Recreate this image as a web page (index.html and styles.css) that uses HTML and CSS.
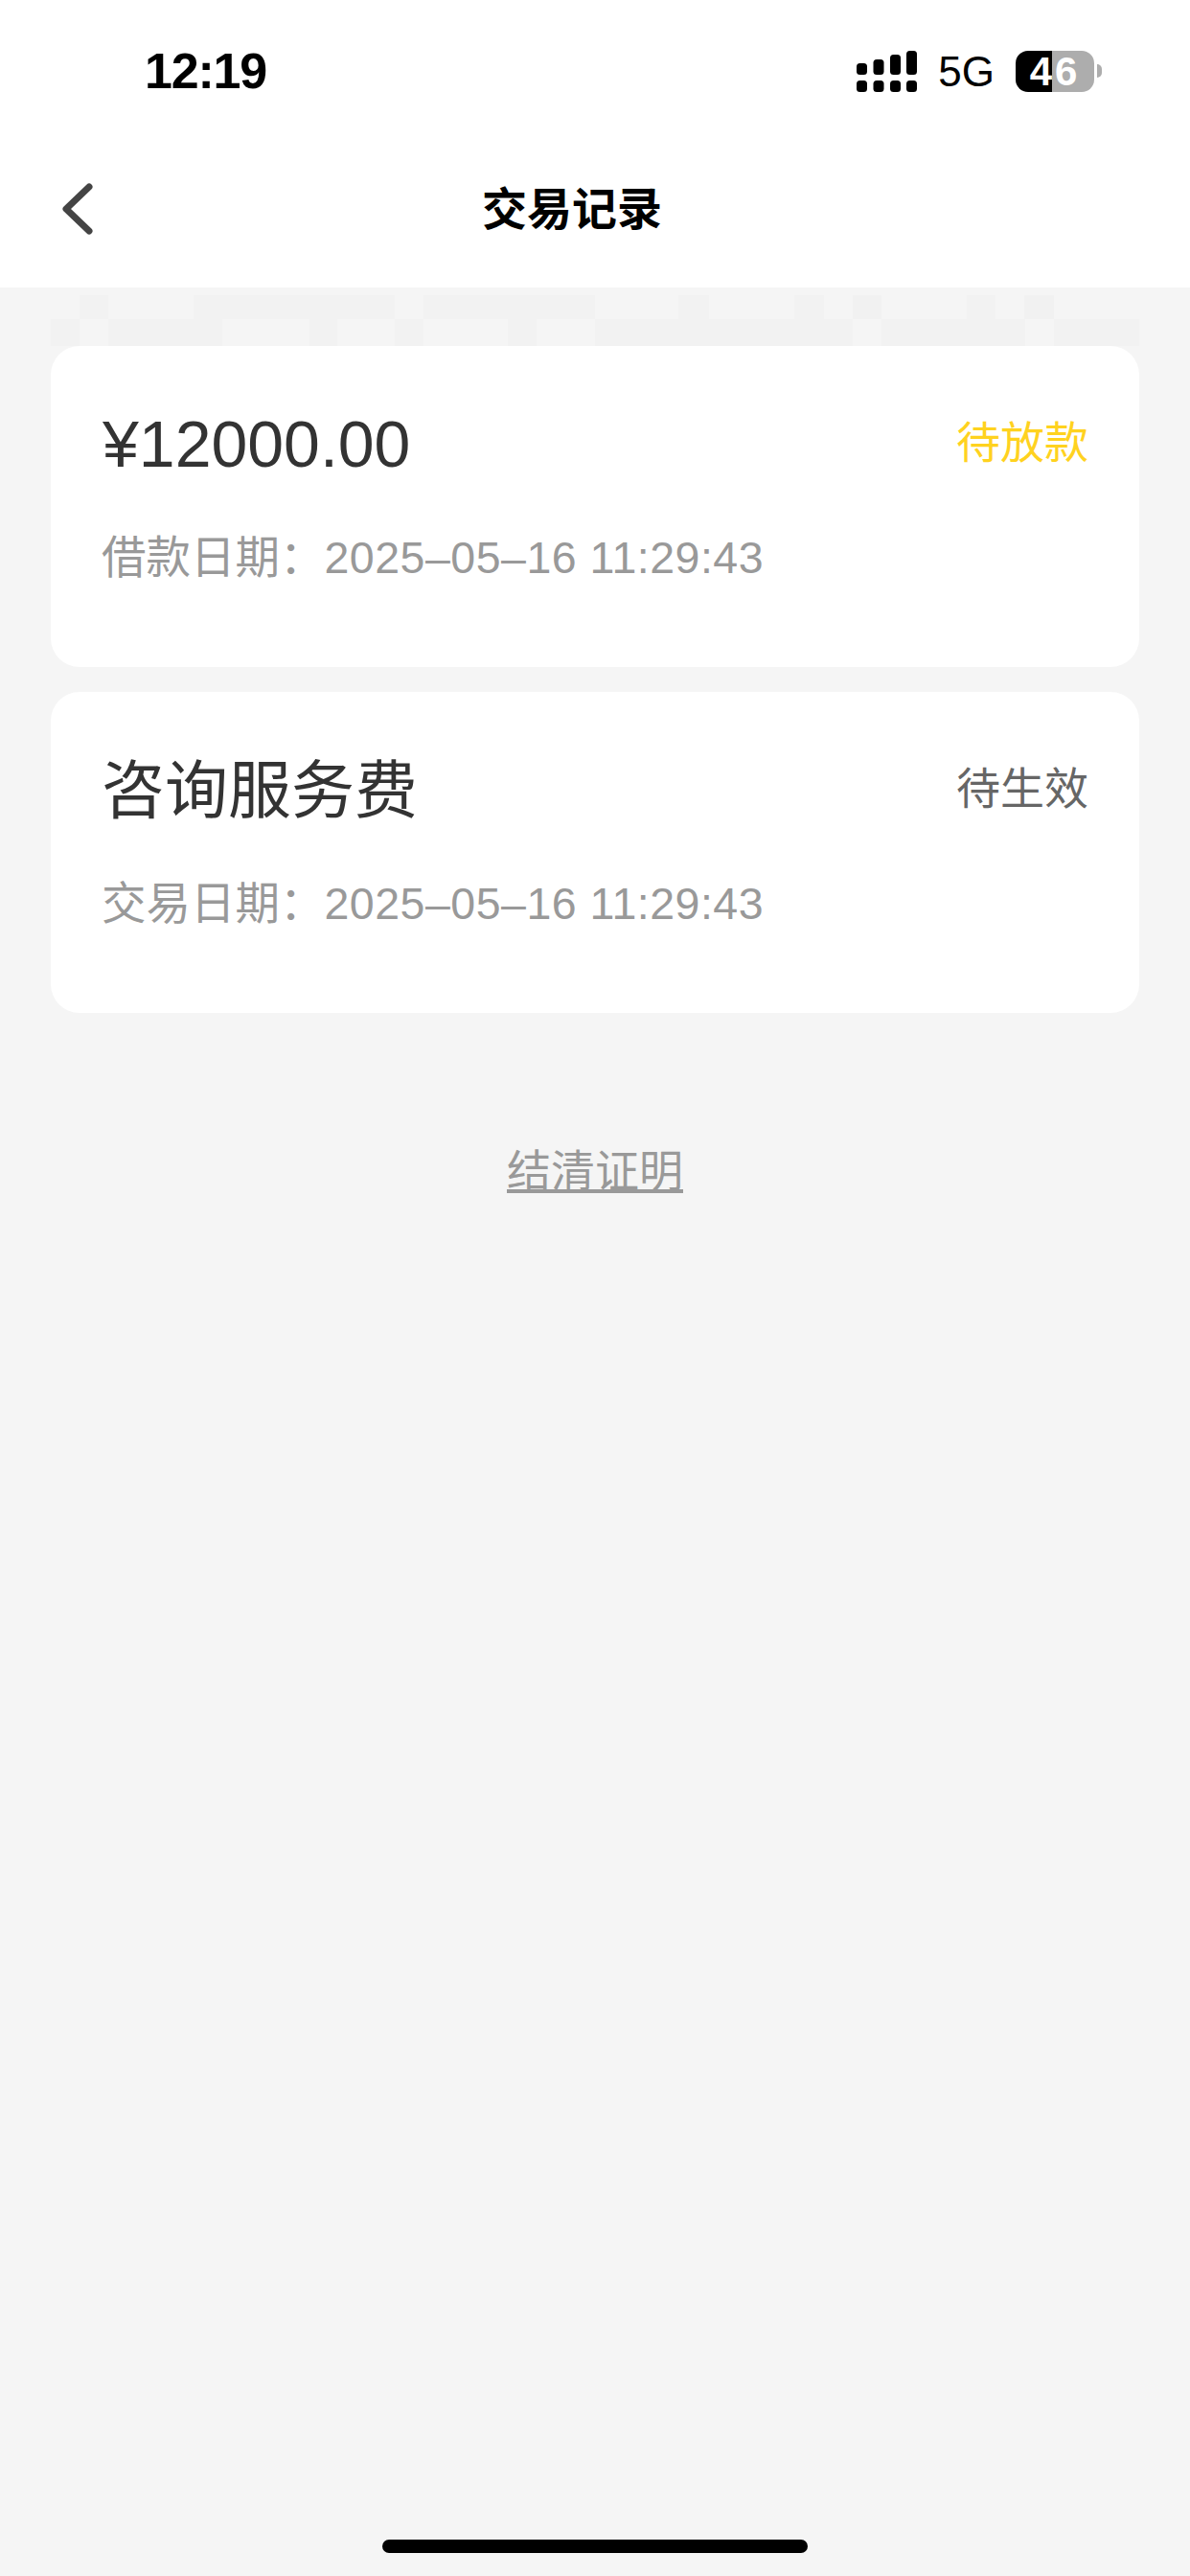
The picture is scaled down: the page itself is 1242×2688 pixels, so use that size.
FILE: index.html
```html
<!DOCTYPE html>
<html lang="zh-CN">
<head>
    <meta charset="UTF-8">
    <meta name="viewport" content="width=device-width, initial-scale=1.0">
    <title>交易记录</title>
    <link rel="stylesheet" href="styles.css">
</head>
<body>
    <div class="page">
        <header class="top">
            <div class="status-bar">
                <span class="time">12:19</span>
                <div class="status-right">
                    <svg class="signal" width="63" height="43" viewBox="0 0 63 43" fill="#000">
                        <rect x="0" y="13" width="11" height="12" rx="3.5"/>
                        <rect x="17.5" y="9" width="11" height="16" rx="3.5"/>
                        <rect x="35" y="4" width="11" height="21" rx="3.5"/>
                        <rect x="52" y="0" width="11" height="25" rx="3.5"/>
                        <rect x="0" y="31" width="11" height="12" rx="3.5"/>
                        <rect x="17.5" y="31" width="11" height="12" rx="3.5"/>
                        <rect x="35" y="31" width="11" height="12" rx="3.5"/>
                        <rect x="52" y="31" width="11" height="12" rx="3.5"/>
                    </svg>
                    <span class="network">5G</span>
                    <div class="battery">
                        <div class="battery-body">
                            <span class="battery-used">4</span>
                            <span class="battery-rest">6</span>
                        </div>
                        <span class="battery-nub"></span>
                    </div>
                </div>
            </div>
            <nav class="nav-bar">
                <svg class="back" width="32" height="54" viewBox="0 0 32 54" fill="none">
                    <path d="M28 4 L4 27 L28 50" stroke="#444" stroke-width="7" stroke-linecap="round" stroke-linejoin="round"/>
                </svg>
                <h1 class="nav-title">交易记录</h1>
            </nav>
        </header>

        <main class="content">
            <div class="mosaic">
                <div class="mosaic-row-a"></div>
                <div class="mosaic-row-b"></div>
            </div>

            <section class="card">
                <div class="card-head">
                    <span class="card-title amount">¥12000.00</span>
                    <span class="state state-pending">待放款</span>
                </div>
                <p class="card-date">借款日期：<span class="date-value">2025–05–16 11:29:43</span></p>
            </section>

            <section class="card">
                <div class="card-head">
                    <span class="card-title">咨询服务费</span>
                    <span class="state">待生效</span>
                </div>
                <p class="card-date">交易日期：<span class="date-value">2025–05–16 11:29:43</span></p>
            </section>

            <a class="proof-link" href="#">结清证明</a>
        </main>

        <div class="home-bar"></div>
    </div>
</body>
</html>
```
FILE: styles.css
```css
body {
    margin: 0;
    background-color: #f5f5f5;
    font-family: "Liberation Sans", "Noto Sans CJK SC", sans-serif;
}
.page {
    display: flex;
    flex-direction: column;
    height: 2688px;
}
.top {
    height: 300px;
    background-color: #fff;
}
.status-bar {
    display: flex;
    justify-content: space-between;
    align-items: center;
    height: 148px;
    padding: 0 92px 0 151px;
}
.time {
    font-size: 52px;
    font-weight: 700;
    letter-spacing: -1.2px;
    color: #000;
}
.status-right {
    display: flex;
    align-items: center;
    gap: 22px;
}
.network {
    font-size: 44px;
    line-height: 43px;
    color: #000;
}
.battery {
    display: flex;
    align-items: center;
    gap: 3px;
}
.battery-body {
    display: flex;
    width: 82px;
    height: 43px;
    font-size: 42px;
    font-weight: 700;
    line-height: 43px;
    color: #fff;
}
.battery-used {
    width: 38px;
    border-radius: 13px 0 0 13px;
    background-color: #000;
    text-align: right;
}
.battery-rest {
    flex: 1;
    padding-left: 3px;
    border-radius: 0 13px 13px 0;
    background-color: #adadad;
}
.battery-nub {
    width: 5px;
    height: 14px;
    border-radius: 0 7px 7px 0;
    background-color: #adadad;
}
.nav-bar {
    position: relative;
    display: flex;
    justify-content: center;
    align-items: center;
    height: 152px;
    margin-top: -4px;
}
.back {
    position: absolute;
    left: 65px;
    top: 47px;
}
.nav-title {
    margin: 0 48px 0 0;
    padding-bottom: 12px;
    font-size: 47px;
    font-weight: 700;
    color: #000;
}
.content {
    flex: 1;
    display: flex;
    flex-direction: column;
    align-items: center;
    padding: 8px 53px 0;
}
.mosaic {
    align-self: stretch;
}
.mosaic-row-a {
    height: 25px;
    background: linear-gradient(90deg,
        #f5f5f5 0 30px, #f2f2f2 30px 60px, #f5f5f5 60px 149px, #f2f2f2 149px 359px,
        #f5f5f5 359px 389px, #f2f2f2 389px 568px, #f5f5f5 568px 655px, #f2f2f2 655px 687px,
        #f5f5f5 687px 776px, #f2f2f2 776px 807px, #f5f5f5 807px 837px, #f1f1f1 837px 867px,
        #f5f5f5 867px 956px, #f2f2f2 956px 986px, #f5f5f5 986px 1016px, #f1f1f1 1016px 1047px,
        #f5f5f5 1047px);
}
.mosaic-row-b {
    height: 28px;
    background: linear-gradient(90deg,
        #f2f2f2 0 30px, #f5f5f5 30px 60px, #f2f2f2 60px 179px, #f5f5f5 179px 270px,
        #f2f2f2 270px 299px, #f5f5f5 299px 359px, #f2f2f2 359px 389px, #f5f5f5 389px 477px,
        #f2f2f2 477px 507px, #f5f5f5 507px 568px, #f2f2f2 568px 837px, #f5f5f5 837px 867px,
        #f2f2f2 867px 1017px, #f5f5f5 1017px 1047px, #f2f2f2 1047px);
}
.card {
    align-self: stretch;
    box-sizing: border-box;
    height: 335px;
    margin-bottom: 26px;
    padding: 54px 53px 0;
    border-radius: 30px;
    background-color: #fff;
}
.card-head {
    display: flex;
    justify-content: space-between;
    align-items: center;
    height: 96px;
}
.card-title {
    padding-bottom: 10px;
    font-size: 66px;
    color: #333;
}
.amount {
    padding-bottom: 0;
    padding-left: 1px;
    font-size: 68px;
}
.state {
    padding-bottom: 10px;
    font-size: 46px;
    color: #666;
}
.state-pending {
    color: #ffd21f;
}
.card-date {
    margin: 41px 0 0;
    font-size: 46.5px;
    line-height: 60px;
    color: #999;
}
.date-value {
    letter-spacing: 0.5px;
}
.proof-link {
    margin-top: 109px;
    font-size: 46px;
    line-height: 60px;
    color: #999;
}
.home-bar {
    align-self: center;
    width: 444px;
    height: 14px;
    margin-bottom: 24px;
    border-radius: 7px;
    background-color: #000;
}
```
